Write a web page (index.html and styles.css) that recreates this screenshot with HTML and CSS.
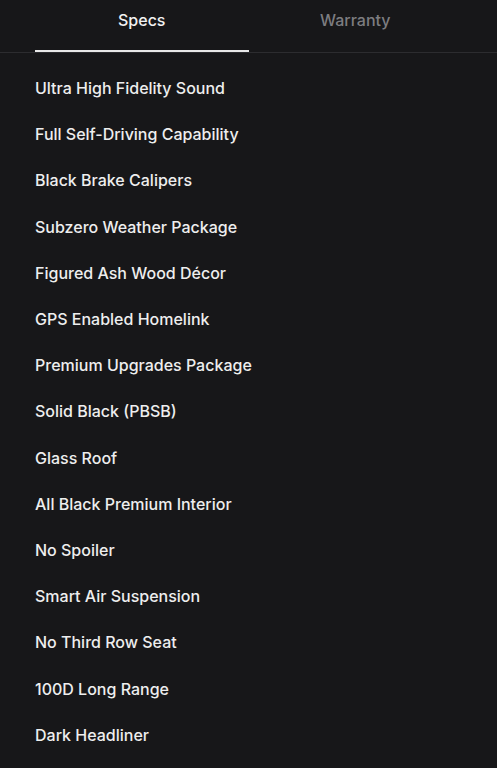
FILE: index.html
```html
<!DOCTYPE html>
<html lang="en">
<head>
<meta charset="utf-8">
<title>Specs</title>
<link rel="stylesheet" href="styles.css">
</head>
<body>
<div class="tabs">
  <div class="tab active">Specs</div>
  <div class="tab">Warranty</div>
</div>
<ul class="specs">
  <li>Ultra High Fidelity Sound</li>
  <li>Full Self-Driving Capability</li>
  <li>Black Brake Calipers</li>
  <li>Subzero Weather Package</li>
  <li>Figured Ash Wood Décor</li>
  <li>GPS Enabled Homelink</li>
  <li>Premium Upgrades Package</li>
  <li>Solid Black (PBSB)</li>
  <li>Glass Roof</li>
  <li>All Black Premium Interior</li>
  <li>No Spoiler</li>
  <li>Smart Air Suspension</li>
  <li>No Third Row Seat</li>
  <li>100D Long Range</li>
  <li>Dark Headliner</li>
</ul>
</body>
</html>
```
FILE: styles.css
```css
html, body {
  margin: 0;
  padding: 0;
  background: #171719;
}
body {
  font-family: "Inter", "Liberation Sans", sans-serif;
  color: #f0f0f0;
  overflow: hidden;
}
.tabs {
  display: flex;
  padding: 0 35px;
  border-bottom: 1px solid #2c2c2f;
}
.tab {
  flex: 1;
  height: 50px;
  display: flex;
  align-items: center;
  justify-content: center;
  padding-bottom: 10px;
  box-sizing: border-box;
  font-size: 16px;
  font-weight: 500;
  color: #7d7d80;
  border-bottom: 2px solid transparent;
  height: 52px;
}
.tab.active {
  color: #f2f2f2;
  border-bottom-color: #e8e8e8;
}
.specs {
  list-style: none;
  margin: 0;
  padding: 12px 35px 0;
}
.specs li {
  height: 46.2px;
  display: flex;
  align-items: center;
  font-size: 16px;
  font-weight: 500;
  color: #eeeeee;
}
```
